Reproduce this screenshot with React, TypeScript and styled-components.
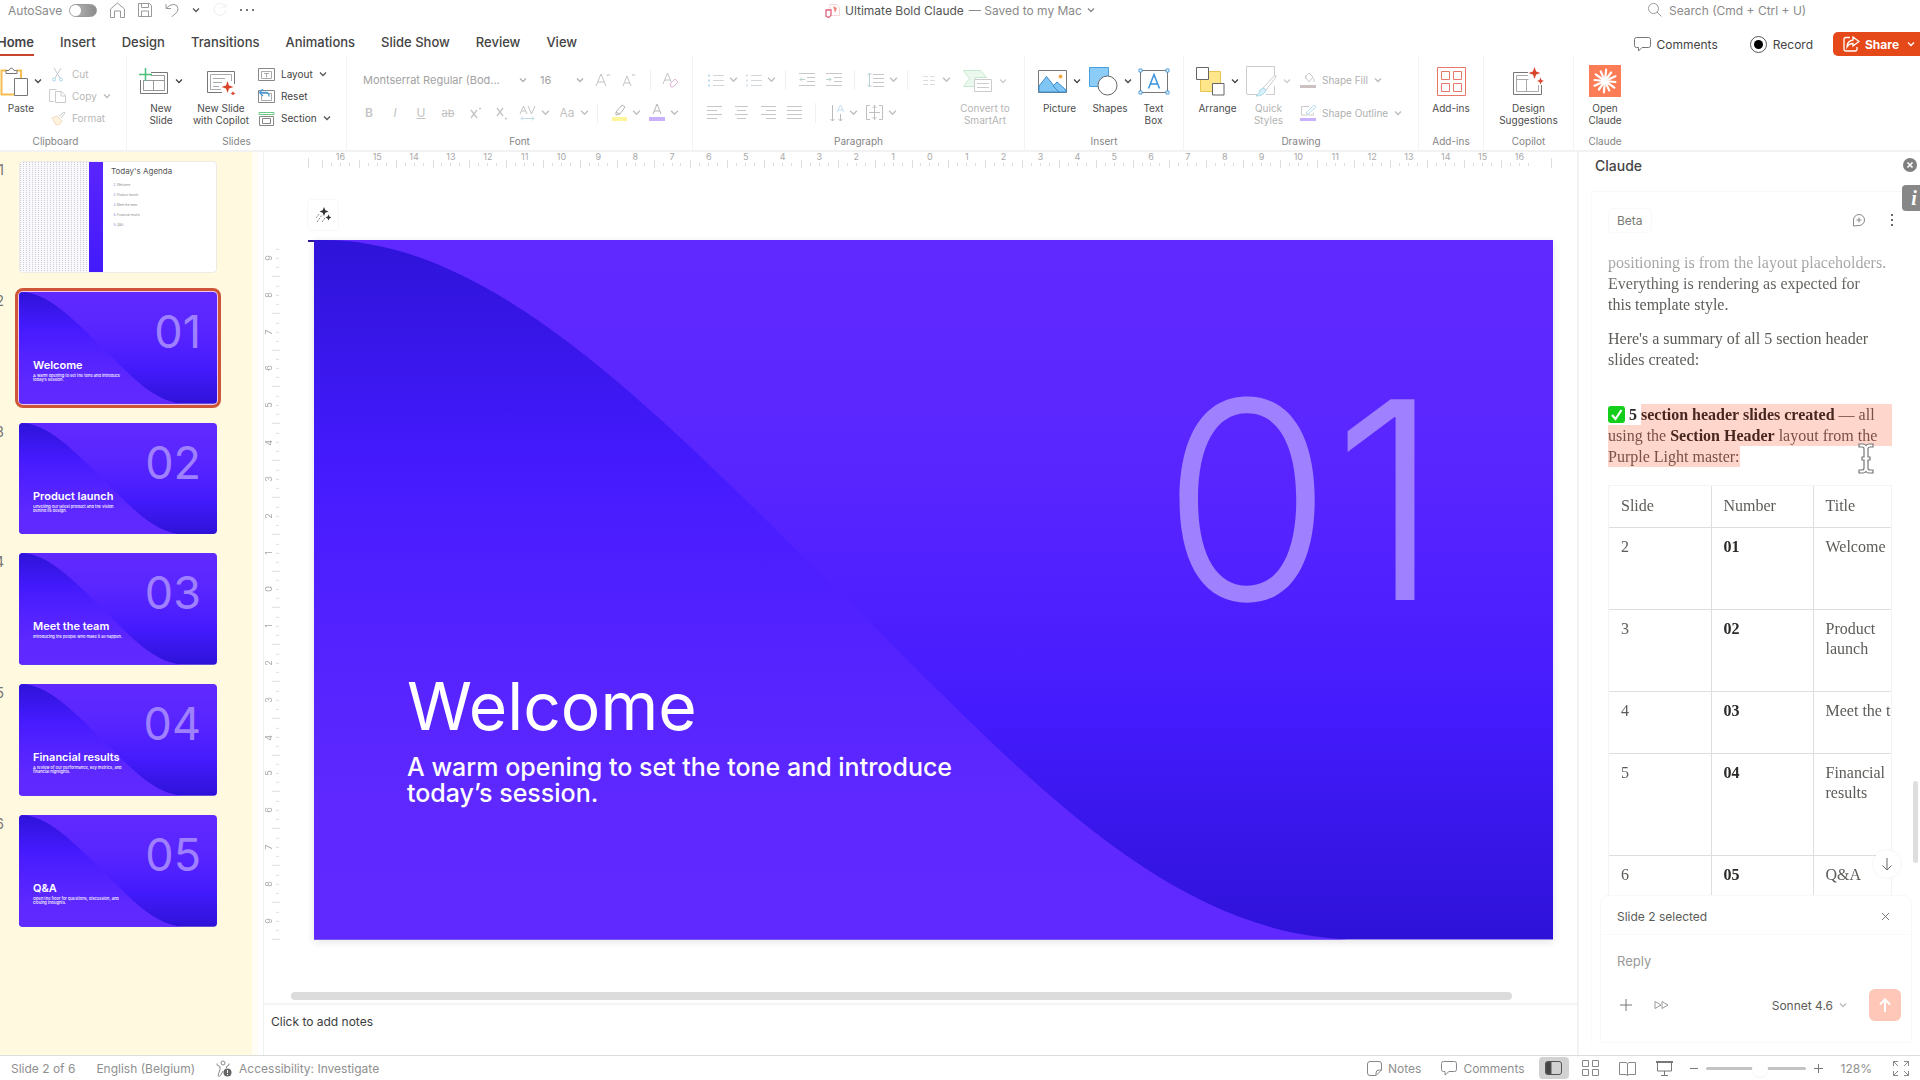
import React from "react";
import styled, { createGlobalStyle, css } from "styled-components";

const sans = `Inter, "Liberation Sans", sans-serif`;
const serif = `"Liberation Serif", serif`;

const GlobalStyle = createGlobalStyle`
  *, *::before, *::after { box-sizing: border-box; }
  body { margin: 0; background: #fff; font-family: ${sans}; color: #444; }
  button, input, select { font: inherit; color: inherit; background: none; border: 0; padding: 0; margin: 0; }
  p { margin: 0; }
  svg { display: block; flex: none; }
`;

/* ---------- shared pieces ---------- */

const Page = styled.div`
  display: flex;
  flex-direction: column;
  height: 100vh;
  overflow: hidden;
`;

const Svg = ({ w, h, children, stroke = "#777", sw = 1 }: {
  w: number; h: number; children: React.ReactNode; stroke?: string; sw?: number;
}) => (
  <svg width={w} height={h} viewBox={`0 0 ${w} ${h}`} fill="none" stroke={stroke} strokeWidth={sw} aria-hidden="true">
    {children}
  </svg>
);

const Chevron = ({ color = "#555", size = 8 }: { color?: string; size?: number }) => (
  <svg width={size} height={size} viewBox="0 0 8 8" fill="none" stroke={color} strokeWidth={1.3} aria-hidden="true">
    <path d="M1 2.5 4 5.5 7 2.5" />
  </svg>
);

/* ---------- title bar ---------- */

const TitleBar = styled.header`
  display: grid;
  grid-template-columns: 1fr auto 1fr;
  align-items: center;
  height: 20px;
  padding: 0 8px;
  flex: none;
  font-size: 12px;
  color: #8a8a8a;
`;

const QuickAccess = styled.div`
  display: flex;
  align-items: center;
  gap: 13px;
`;

const IconButton = styled.button<{ $before?: number; $w?: number }>`
  display: flex;
  align-items: center;
  justify-content: center;
  flex: none;
  margin-left: ${(p) => p.$before ?? 0}px;
  width: ${(p) => (p.$w ? `${p.$w}px` : "auto")};
`;

const ToggleLabel = styled.label`
  display: flex;
  align-items: center;
  gap: 7px;
`;

const Toggle = styled.input`
  appearance: none;
  width: 28px;
  height: 13px;
  border-radius: 7px;
  background: linear-gradient(90deg, #bbb, #8c8c8c);
  border: 1px solid #999;
  &::before {
    content: "";
    display: block;
    width: 11px;
    height: 11px;
    border-radius: 50%;
    background: #fff;
  }
`;

const DocTitle = styled.button`
  display: flex;
  align-items: center;
  gap: 5px;
  color: #8a8a8a;
  b { font-weight: 400; color: #555; }
`;

const SearchBox = styled.label`
  display: flex;
  align-items: center;
  justify-content: flex-end;
  gap: 7px;
  padding-right: 101px;
  input { width: 142px; }
  input::placeholder { color: #8a8a8a; opacity: 1; }
`;

/* ---------- tabs ---------- */

const TabBar = styled.nav`
  display: flex;
  align-items: center;
  height: 36px;
  flex: none;
  font-size: 13px;
  color: #444;
`;

const Tab = styled.button<{ $active?: boolean }>`
  height: 100%;
  margin-right: 26px;
  font-weight: ${(p) => (p.$active ? 600 : 500)};
  padding-top: 9px;
  border-bottom: 2px solid ${(p) => (p.$active ? "#c8452d" : "transparent")};
  ${(p) => p.$active && css`margin-left: -3px;`}
`;

const TabActions = styled.div`
  display: flex;
  align-items: center;
  gap: 32px;
  margin-left: auto;
  padding-top: 12px;
  font-size: 12px;
`;

const TextButton = styled.button<{ $gap?: number; $color?: string }>`
  display: flex;
  align-items: center;
  gap: ${(p) => p.$gap ?? 6}px;
  color: ${(p) => p.$color ?? "inherit"};
  white-space: nowrap;
`;

const ShareButton = styled.button`
  display: flex;
  align-items: center;
  gap: 5px;
  height: 24px;
  width: 87px;
  padding-left: 10px;
  margin-left: -12px;
  border-radius: 5px 0 0 5px;
  background: #e54819;
  color: #fff;
  font-weight: 700;
  svg:last-child { margin-left: 3px; }
`;

/* ---------- ribbon ---------- */

const Ribbon = styled.div`
  display: flex;
  height: 96px;
  flex: none;
  margin-left: -15px;
  border-bottom: 2px solid #f2f2f2;
  font-size: 10px;
`;

const GroupBox = styled.section<{ $w: number; $pad?: number; $center?: boolean }>`
  display: flex;
  flex-direction: column;
  flex: none;
  width: ${(p) => p.$w}px;
  border-right: 1px solid #f3f3f3;
  &:last-child { border-right: 0; }
  > div {
    display: flex;
    flex: 1;
    padding: 7px 0 0 ${(p) => p.$pad ?? 0}px;
    justify-content: ${(p) => (p.$center ? "center" : "flex-start")};
  }
  > h2 {
    margin: 0;
    font-size: 10px;
    line-height: 18px;
    font-weight: 400;
    color: #858585;
    text-align: center;
  }
`;

const Group = ({ label, w, pad, center, children }: {
  label: string; w: number; pad?: number; center?: boolean; children: React.ReactNode;
}) => (
  <GroupBox $w={w} $pad={pad} $center={center}>
    <div>{children}</div>
    <h2>{label}</h2>
  </GroupBox>
);

const Big = styled.button<{ $w: number; $off?: boolean }>`
  display: flex;
  flex-direction: column;
  align-items: center;
  width: ${(p) => p.$w}px;
  line-height: 12px;
  color: ${(p) => (p.$off ? "#b5b5b5" : "#4c4c4c")};
  white-space: pre;
  text-align: center;
  > span {
    display: flex;
    align-items: center;
    gap: 6px;
    height: 36px;
    margin-bottom: 3px;
  }
`;

const BigButton = ({ label, w, icon, chevron, off }: {
  label: string; w: number; icon: React.ReactNode; chevron?: boolean; off?: boolean;
}) => (
  <Big $w={w} $off={off} disabled={off}>
    <span>{icon}{chevron && <Chevron color={off ? "#ccc" : "#444"} />}</span>
    {label}
  </Big>
);

const Stack = styled.div<{ $before: number; $row: number }>`
  display: flex;
  flex-direction: column;
  margin-left: ${(p) => p.$before}px;
  > button { height: ${(p) => p.$row}px; }
`;

const ToolRows = styled.div`
  display: flex;
  flex-direction: column;
`;

const ToolRow = styled.div`
  display: flex;
  align-items: center;
  height: 33px;
  color: #c4c4c4;
  font-size: 12px;
  b { font-weight: 600; }
  s { font-size: 11px; }
`;

const Select = styled.select<{ $w: number }>`
  appearance: none;
  width: ${(p) => p.$w}px;
  font-size: 11px;
  color: #a2a2a2;
`;

const Rule = styled.i<{ $before: number }>`
  width: 1px;
  height: 20px;
  margin-left: ${(p) => p.$before}px;
  background: #f0f0f0;
`;

const Drop = ({ icon, w, before, label }: { icon: React.ReactNode; w: number; before: number; label: string }) => (
  <IconButton $before={before} aria-label={label}>
    <IconButton as="span" $w={w}>{icon}</IconButton>
    <IconButton as="span" $before={5}><Chevron color="#c0c0c0" size={9} /></IconButton>
  </IconButton>
);

const Lines = ({ rows, w = 15 }: { rows: [number, number][]; w?: number }) => (
  <Svg w={w} h={14} stroke="#c8c8c8">
    {rows.map(([a, b], i) => <path key={i} d={`M${a} ${i * 4 + 0.5}H${b}`} />)}
  </Svg>
);

const ListIcon = ({ dots }: { dots: string }) => (
  <Svg w={17} h={14} stroke="#d2d6d8">
    <path d="M6 2.5h11M6 7.5h11M6 12.5h11" />
    <path d="M1 2.5h2M1 7.5h2M1 12.5h2" stroke={dots} strokeWidth={2} />
  </Svg>
);

const FrameIcon = ({ variant }: { variant: "layout" | "reset" | "section" }) => (
  <Svg w={17} h={15} stroke="#888">
    {variant === "section" ? (
      <><path d="M1 1.5h15v2H1z" stroke="#6fca8a" /><path d="M1.5 5.5h14v9h-14zM4.5 7.5h8v5h-8z" /></>
    ) : (
      <><path d="M.5 1.5h16v12H.5z" /><path d="M3.5 4.5h10v7h-10z" stroke="#aaa" /></>
    )}
    {variant === "layout" && <path d="M6 6.5h5M8.5 6.500v4" stroke="#aaa" />}
    {variant === "reset" && <path d="M5 0 1.500 3.500 5 7M1.500 3.500H8q3 0 3 4" stroke="#4a9fe0" strokeWidth={1.400} />}
  </Svg>
);

const icons = {
  paste: (
    <Svg w={28} h={31}>
      <path d="M7 4.500H1.500v24H14M17 4.500h4V12" stroke="#f4bd4f" strokeWidth={2} />
      <path d="M6 7.500V4.500h3q2-5 5 0h3v3z" fill="#fff" />
      <path d="M14.500 12.500h13v17h-13z" fill="#fff" />
    </Svg>
  ),
  newSlide: (
    <Svg w={30} h={27}>
      <path d="M12 4.500h16.500v21H1.500V12" /><path d="M12 7.500h13.500v15H4.500V12M4.500 12.500h21M14.500 12.500v10" stroke="#999" />
      <path d="M6.500 0v13M0 6.500h13" stroke="#4bc07a" strokeWidth={1.500} />
    </Svg>
  ),
  copilotSlide: (
    <Svg w={30} h={27}>
      <path d="M16 24.500H1.500V3.500h27V16" /><path d="M15 21.500H4.500V6.500h21V13M7 10.500h12M7 14.500h9M7 18.500h6" stroke="#aaa" />
      <path d="m21.500 13 1.500 4.500 4.500 1.500-4.500 1.500-1.500 4.500-1.500-4.500-4.500-1.500 4.500-1.500zM27 23l.8 1.700 1.700.8-1.700.8L27 28l-.8-1.700-1.700-.8 1.700-.8z" fill="#d8452a" stroke="none" />
    </Svg>
  ),
  smartArt: (
    <Svg w={30} h={24} stroke="#ccc">
      <path d="M.5 1.500h17l6 7H12v9H.5l6-8z" fill="#eaf8ee" stroke="#c5e8cf" /><path d="M11.500 10.500h17v12h-17zM14 14.500h12M14 18.500h12" fill="#fff" />
    </Svg>
  ),
  picture: (
    <Svg w={29} h={23}>
      <path d="M.5.5h28v22H.5z" fill="#fff" />
      <path d="M1 16 8.500 6.500 21 22H1z" fill="#7fc6f5" stroke="#3c8dd0" /><path d="m15 16 4-4 9 8v2h-7z" fill="#7fc6f5" stroke="#3c8dd0" />
      <circle cx="22.500" cy="6.500" r="2" fill="#f5a94b" stroke="none" />
    </Svg>
  ),
  shapes: (
    <Svg w={29} h={29}>
      <path d="M.5.5h19v19H.5z" fill="#8ccdf7" stroke="#4a9fe0" /><circle cx="18.500" cy="18.500" r="9.500" fill="#fff" stroke="#666" />
    </Svg>
  ),
  textBox: (
    <Svg w={32} h={27}>
      <path d="M2.500 2.500h27v22h-27z" /><path d="M1 1h3v3H1zM28 1h3v3h-3zM1 23h3v3H1zM28 23h3v3h-3z" fill="#fff" stroke="#4a9fe0" />
      <path d="m10.500 20.500 5.500-14 5.500 14M12.500 16h7" stroke="#3a93dc" strokeWidth={1.500} />
    </Svg>
  ),
  arrange: (
    <Svg w={29} h={29}>
      <path d="M4.500 4.500h20v20h-20z" fill="#ffe68a" stroke="#e8c450" /><path d="M.5.500h12v12H.5zM16.500 16.500h11.500v11.500H16.500z" fill="#fff" stroke="#666" />
    </Svg>
  ),
  quickStyles: (
    <Svg w={31} h={31} stroke="#ccc">
      <path d="M12 28.500H2q-1.500 0-1.500-1.500V.5h28V10M28.500 20v8.500H20" />
      <path d="m30 11-10 13-3-2L28 10q3-1 2 1z" fill="#fff" /><path d="M17 22l3 2q-2 6-10 6 4-3 4-6z" fill="#d8f0f8" stroke="#a9d8e8" />
    </Svg>
  ),
  addIns: (
    <Svg w={29} h={29} stroke="#e8796a">
      <path d="M.5.500h28v28H.5zM4.500 4.500h8v8h-8zM16.500 4.500h8v8h-8zM4.500 16.500h8v8h-8zM16.500 16.500h8v8h-8z" />
    </Svg>
  ),
  design: (
    <Svg w={31} h={29}>
      <path d="M15 5.500H.5v22h28V18" /><path d="M15 8.500H3.500v16h22V18M3.500 12.500h12M13.500 12.500v12" stroke="#aaa" />
      <path d="m21.500 0 1.600 4.400 4.400 1.600-4.400 1.600L21.500 12l-1.600-4.400L15.500 6l4.400-1.600zM27.500 10.500l1 2.500 2.500 1-2.500 1-1 2.500-1-2.500-2.500-1 2.500-1z" fill="#d8452a" stroke="none" />
    </Svg>
  ),
  claude: (
    <Svg w={32} h={32} stroke="#fff" sw={2.200}>
      <path d="M0 0h32v32H0z" fill="#fb7c55" stroke="none" />
      {Array.from({ length: 12 }, (_, i) => {
        const a = (i * Math.PI) / 6 + 0.1;
        const r = i % 2 ? 11.5 : 10.5;
        return <path key={i} strokeLinecap="round" d={`M16 16L${(16 + r * Math.cos(a)).toFixed(1)} ${(16 + r * Math.sin(a)).toFixed(1)}`} />;
      })}
    </Svg>
  ),
};

const HomeRibbon = () => (
  <Ribbon>
    <Group label="Clipboard" w={142} pad={13}>
      <BigButton label="Paste" w={46} chevron icon={icons.paste} />
      <Stack $before={5} $row={22}>
        <TextButton $color="#b8b8b8">
          <Svg w={17} h={15} stroke="#c6cdd2"><path d="m5 1 6 10M12 1 6 11" /><circle cx="5" cy="12.500" r="1.500" stroke="#a9d8ee" /><circle cx="12" cy="12.500" r="1.500" stroke="#a9d8ee" /></Svg>Cut
        </TextButton>
        <TextButton $color="#b8b8b8">
          <Svg w={17} h={16} stroke="#ccc"><path d="M5 13.500H.5V1.500h7M6.500 3.500h6l4 4v7h-10zM12 4v4h4" /></Svg>Copy<Chevron color="#bbb" />
        </TextButton>
        <TextButton $color="#b8b8b8">
          <Svg w={17} h={15} stroke="#ccc"><path d="m10 5 5-4 1 1-4 5" /><path d="m3 7 5-2 5 5-2 3-4 1z" fill="#fff3df" stroke="#f2dcc0" /></Svg>Format
        </TextButton>
      </Stack>
    </Group>
    <Group label="Slides" w={220} pad={3}>
      <BigButton label={"New\nSlide"} w={62} chevron icon={icons.newSlide} />
      <BigButton label={"New Slide\nwith Copilot"} w={58} icon={icons.copilotSlide} />
      <Stack $before={8} $row={22}>
        <TextButton><FrameIcon variant="layout" />Layout<Chevron /></TextButton>
        <TextButton><FrameIcon variant="reset" />Reset</TextButton>
        <TextButton><FrameIcon variant="section" />Section<Chevron /></TextButton>
      </Stack>
    </Group>
    <Group label="Font" w={346} pad={16}>
      <ToolRows>
        <ToolRow>
          <Select $w={156} aria-label="Font"><option>Montserrat Regular (Bod...</option></Select>
          <Chevron color="#b0b0b0" />
          <IconButton $before={13}><Select $w={36} aria-label="Font size"><option>16</option></Select><Chevron color="#b0b0b0" /></IconButton>
          <IconButton $before={11} aria-label="Increase font size"><Svg w={16} h={16} stroke="#c4c4c4"><path d="m1 14 5-12 5 12M3 10h6M12 4l1.500-2L15 4" /></Svg></IconButton>
          <IconButton $before={11} aria-label="Decrease font size"><Svg w={14} h={16} stroke="#c4c4c4"><path d="m1 14 4-10 4 10M3 11h5M10 2l1.500 2L13 2" /></Svg></IconButton>
          <Rule $before={14} />
          <IconButton $before={11} aria-label="Clear formatting"><Svg w={17} h={17} stroke="#c4c4c4"><path d="m1 13 4.500-11L10 13M3 9h5" /><path d="m8 13 5-5 3 3-5 5h-2z" fill="#fff" stroke="#e6b5dc" /></Svg></IconButton>
        </ToolRow>
        <ToolRow>
          <IconButton $w={12} aria-label="Bold"><b>B</b></IconButton>
          <IconButton $w={12} $before={14} aria-label="Italic"><i>I</i></IconButton>
          <IconButton $w={12} $before={14} aria-label="Underline"><u>U</u></IconButton>
          <IconButton $w={16} $before={13} aria-label="Strikethrough"><s>ab</s></IconButton>
          <IconButton $w={14} $before={13} aria-label="Superscript"><Svg w={12} h={14} stroke="#c4c4c4" sw={1.300}><path d="m1 4 6 8M7 4l-6 8M9 2.500h2" /></Svg></IconButton>
          <IconButton $w={14} $before={12} aria-label="Subscript"><Svg w={12} h={14} stroke="#c4c4c4" sw={1.300}><path d="m1 2 6 8M7 2l-6 8M9 12.500h2" /></Svg></IconButton>
          <Drop before={10} w={17} label="Character spacing" icon={<Svg w={17} h={16} stroke="#c4c4c4"><path d="m1 9 3.500-8L8 9M2 6h5M9 1l3.500 8L16 1" /><path d="M2 13.500h13M4 11.500l-2 2 2 2M13 11.500l2 2-2 2" stroke="#c2dde8" /></Svg>} />
          <Drop before={9} w={16} label="Change case" icon="Aa" />
          <Rule $before={8} />
          <Drop before={14} w={15} label="Highlight" icon={<Svg w={15} h={17} stroke="#b5b5b5"><path d="m4 8 6-7 3 2-5 7-4 1zM4 8l4 2" /><path d="M0 13h15v4H0z" fill="#fdf59a" stroke="none" /></Svg>} />
          <Drop before={8} w={16} label="Font color" icon={<Svg w={16} h={17} stroke="#b5b5b5"><path d="M4 10 8 0l4 10M5 7h6" /><path d="M0 13h16v4H0z" fill="#c9b2fb" stroke="none" /></Svg>} />
        </ToolRow>
      </ToolRows>
    </Group>
    <Group label="Paragraph" w={332} pad={14}>
      <ToolRows>
        <ToolRow>
          <Drop before={0} w={17} label="Bullets" icon={<ListIcon dots="#bfdcee" />} />
          <Drop before={7} w={17} label="Numbering" icon={<ListIcon dots="#d8e2e6" />} />
          <Rule $before={9} />
          <IconButton $before={13} aria-label="Decrease indent"><Svg w={16} h={14} stroke="#c8c8c8"><path d="M0 .5h16M8 4.500h8M8 8.500h8M0 12.500h16" /><path d="M6 6.500H1M3 4.500l-2 2 2 2" stroke="#b9d3c8" /></Svg></IconButton>
          <IconButton $before={11} aria-label="Increase indent"><Svg w={16} h={14} stroke="#c8c8c8"><path d="M0 .5h16M8 4.500h8M8 8.500h8M0 12.500h16" /><path d="M0 6.500h5M3 4.500l2 2-2 2" stroke="#b9d3c8" /></Svg></IconButton>
          <Rule $before={12} />
          <Drop before={12} w={17} label="Line spacing" icon={<Svg w={17} h={16} stroke="#c8c8c8"><path d="M6 2.500h11M6 6.500h11M6 10.500h11M6 14.500h11" /><path d="M2.500 1v14M.5 3l2-2 2 2M.5 13l2 2 2-2" stroke="#b9cfd8" /></Svg>} />
          <Rule $before={9} />
          <Drop before={13} w={16} label="Columns" icon={<Svg w={12} h={10} stroke="#d8dde2"><path d="M0 1.500h5M0 5.500h5M0 9.500h5M7 1.500h5M7 5.500h5M7 9.500h5" /></Svg>} />
        </ToolRow>
        <ToolRow>
          <IconButton aria-label="Align left"><Lines rows={[[0, 15], [0, 10], [0, 15], [0, 10]]} /></IconButton>
          <IconButton $before={12} aria-label="Center"><Lines rows={[[1, 14], [3, 12], [1, 14], [3, 12]]} /></IconButton>
          <IconButton $before={12} aria-label="Align right"><Lines rows={[[0, 15], [5, 15], [0, 15], [5, 15]]} /></IconButton>
          <IconButton $before={11} aria-label="Justify"><Lines rows={[[0, 15], [0, 15], [0, 15], [0, 15]]} /></IconButton>
          <Rule $before={13} />
          <Drop before={14} w={14} label="Text direction" icon={<Svg w={14} h={18} stroke="#bbb"><path d="M2.500 1v16M.5 15l2 2 2-2M10.500 10v7M8.500 15l2 2 2-2" /><path d="m7 8 3.500-7L14 8M8 6h5" stroke="#c2dff0" /></Svg>} />
          <Drop before={8} w={17} label="Align text" icon={<Svg w={17} h={15} stroke="#c0c0c0"><path d="M4 .5H.5v14H4M13 .5h3.500v14H13M8.500 0v15M3 7.500h11M6.500 3l2-2 2 2M6.500 12l2 2 2-2" /></Svg>} />
        </ToolRow>
      </ToolRows>
      <BigButton label={"Convert to\nSmartArt"} w={68} off chevron icon={icons.smartArt} />
    </Group>
    <Group label="Insert" w={159} pad={9}>
      <BigButton label="Picture" w={51} chevron icon={icons.picture} />
      <BigButton label="Shapes" w={50} chevron icon={icons.shapes} />
      <BigButton label={"Text\nBox"} w={37} icon={icons.textBox} />
    </Group>
    <Group label="Drawing" w={235} pad={8}>
      <BigButton label="Arrange" w={51} chevron icon={icons.arrange} />
      <BigButton label={"Quick\nStyles"} w={51} off chevron icon={icons.quickStyles} />
      <Stack $before={6} $row={33}>
        <TextButton $color="#b0b0b0">
          <Svg w={16} h={16} stroke="#ccc"><path d="m5 5 4-4 4 4-4 5zM13 6q2 2 1 4M6 3v4" /><path d="M0 13h16v3H0z" fill="#cdc0c0" stroke="none" /></Svg>Shape Fill<Chevron color="#bbb" />
        </TextButton>
        <TextButton $color="#b0b0b0">
          <Svg w={16} h={16} stroke="#ccc"><path d="M9 1.500H1.500V10h12V8" /><path d="m6 8 8-8 2 2-8 7z" stroke="#b6dced" /><path d="M0 13h16v3H0z" fill="#c9b2fb" stroke="none" /></Svg>Shape Outline<Chevron color="#bbb" />
        </TextButton>
      </Stack>
    </Group>
    <Group label="Add-ins" w={65} center><BigButton label="Add-ins" w={60} icon={icons.addIns} /></Group>
    <Group label="Copilot" w={90} center><BigButton label={"Design\nSuggestions"} w={80} icon={icons.design} /></Group>
    <Group label="Claude" w={62} center><BigButton label={"Open\nClaude"} w={60} icon={icons.claude} /></Group>
  </Ribbon>
);

/* ---------- slides ---------- */

type SlideData = { number: string; title: string; text: string };

const slides: SlideData[] = [
  { number: "01", title: "Welcome", text: "A warm opening to set the tone and introduce\ntoday’s session." },
  { number: "02", title: "Product launch", text: "Unveiling our latest product and the vision\nbehind its design." },
  { number: "03", title: "Meet the team", text: "Introducing the people who make it all happen." },
  { number: "04", title: "Financial results", text: "A review of our performance, key metrics, and\nfinancial highlights." },
  { number: "05", title: "Q&A", text: "Open the floor for questions, discussion, and\nclosing thoughts." },
];

const SlideBox = styled.article<{ $large?: boolean }>`
  display: grid;
  width: 100%;
  aspect-ratio: 1238 / 699;
  overflow: hidden;
  border-radius: ${(p) => (p.$large ? 0 : 4)}px;
  color: #fff;
  > * { grid-area: 1 / 1; }
  > svg { width: 100%; height: 100%; }
`;

const SlideText = styled.div<{ $large?: boolean }>`
  display: flex;
  flex-direction: column;
  padding: ${(p) => (p.$large ? "122px 112px 0 93px" : "17px 16px 0 14px")};
  h3, h4, p { margin: 0; white-space: pre; }
  h3 {
    align-self: flex-end;
    font-size: ${(p) => (p.$large ? 276 : 45)}px;
    line-height: ${(p) => (p.$large ? 276 : 45)}px;
    font-weight: ${(p) => (p.$large ? 350 : 400)};
    color: #9f80ff;
  }
  h4 {
    font-size: ${(p) => (p.$large ? 66 : 11)}px;
    line-height: ${(p) => (p.$large ? 64 : 12)}px;
    font-weight: ${(p) => (p.$large ? 400 : 600)};
    margin-top: ${(p) => (p.$large ? 36 : 5)}px;
  }
  p {
    font-size: ${(p) => (p.$large ? 25 : 4)}px;
    line-height: ${(p) => (p.$large ? 26 : 4)}px;
    font-weight: 500;
    margin-top: ${(p) => (p.$large ? 16 : 3)}px;
  }
`;

const Slide = ({ data, large }: { data: SlideData; large?: boolean }) => {
  const id = `wave${large ? "L" : "S"}${data.number}`;
  return (
    <SlideBox $large={large}>
      <svg viewBox="0 0 1238 699" preserveAspectRatio="none" aria-hidden="true">
        <defs>
          <linearGradient id={`${id}a`} x1="0" y1="0" x2="0" y2="1">
            <stop offset="0" stopColor="#6029ff" /><stop offset=".3" stopColor="#5a26ff" />
            <stop offset=".5" stopColor="#5020ff" /><stop offset=".68" stopColor="#441bfd" />
            <stop offset="1" stopColor="#2e12d8" />
          </linearGradient>
          <linearGradient id={`${id}b`} x1="0" y1="0" x2="0" y2="1">
            <stop offset="0" stopColor="#2e13d8" /><stop offset=".3" stopColor="#431afc" />
            <stop offset=".4" stopColor="#4a1dff" /><stop offset=".6" stopColor="#5523ff" />
            <stop offset=".8" stopColor="#5e28ff" /><stop offset="1" stopColor="#6029ff" />
          </linearGradient>
        </defs>
        <path d="M0 0h1238v699H0z" fill={`url(#${id}a)`} />
        <path d="M0 0h10C180 0 345 175 522 349S850 699 1045 699H0z" fill={`url(#${id}b)`} />
      </svg>
      <SlideText $large={large}>
        <h3>{data.number}</h3>
        <h4>{data.title}</h4>
        <p>{data.text}</p>
      </SlideText>
    </SlideBox>
  );
};

const AgendaSlide = styled.article`
  display: flex;
  width: 100%;
  aspect-ratio: 1238 / 699;
  background: #fff;
  border: 1px solid #ecebe6;
  border-radius: 4px;
  overflow: hidden;
  > i {
    width: 69px;
    background:
      repeating-linear-gradient(#0000 0 1px, #f9f9fc 1px 2px),
      repeating-linear-gradient(90deg, #cfccde 0 1px, #f9f9fc 1px 3px);
  }
  > b { width: 14px; background: linear-gradient(#5a25ff, #421afa); }
  > div { padding: 4px 0 0 8px; }
  h3 { margin: 0 0 4px; font-size: 8px; line-height: 10px; font-weight: 400; color: #555; white-space: nowrap; }
  ol { margin: 0; padding: 0 0 0 6px; font-size: 3px; line-height: 10px; color: #888; }
  li::marker { color: #7a66e8; }
`;

const Thumbs = styled.aside`
  display: flex;
  flex-direction: column;
  gap: 19px;
  width: 258px;
  flex: none;
  padding-top: 9px;
  background: #fff9e0;
  border-right: 6px solid #fffdf4;
`;

const ThumbItem = styled.div`
  display: flex;
  gap: 15px;
  > span {
    display: flex;
    justify-content: flex-end;
    width: 4px;
    font-size: 14px;
    line-height: 17px;
    color: #777;
  }
`;

const ThumbButton = styled.button<{ $selected?: boolean }>`
  width: 198px;
  border-radius: 4px;
  text-align: left;
  ${(p) => p.$selected && css`
    outline: 3px solid #cd5638;
    outline-offset: 1px;
    box-shadow: 0 0 0 1px #f0c4f0;
  `}
`;

/* ---------- editor ---------- */

const Main = styled.main`
  display: flex;
  flex: 1;
  min-height: 0;
`;

const Editor = styled.section`
  display: flex;
  flex-direction: column;
  flex: 1;
  min-width: 0;
  margin-left: 5px;
  border-left: 1px solid #f0f0f0;
  border-right: 2px solid #f2f2f2;
`;

const ruleTick = "#dedede";

const HRuler = styled.div`
  display: flex;
  height: 16px;
  padding: 0 39px 0 58px;
  font-size: 9px;
  line-height: 9px;
  color: #a8a8a8;
  background:
    linear-gradient(${ruleTick}, ${ruleTick}) 44px 100% / 1px 10px no-repeat,
    linear-gradient(${ruleTick}, ${ruleTick}) calc(100% - 25px) 100% / 1px 10px no-repeat;
  span {
    flex: 1;
    text-align: center;
    background:
      linear-gradient(${ruleTick}, ${ruleTick}) left bottom / 1px 8px no-repeat,
      linear-gradient(${ruleTick}, ${ruleTick}) 25% calc(100% - 2px) / 1px 3px no-repeat,
      linear-gradient(${ruleTick}, ${ruleTick}) 50% calc(100% - 2px) / 1px 3px no-repeat,
      linear-gradient(${ruleTick}, ${ruleTick}) 75% calc(100% - 2px) / 1px 3px no-repeat;
  }
`;

const VRuler = styled.div`
  display: flex;
  flex-direction: column;
  width: 16px;
  font-size: 9px;
  line-height: 9px;
  color: #a8a8a8;
  span {
    display: flex;
    flex: 1;
    justify-content: center;
    writing-mode: vertical-rl;
    transform: rotate(180deg);
    background:
      linear-gradient(${ruleTick}, ${ruleTick}) left top / 8px 1px no-repeat,
      linear-gradient(${ruleTick}, ${ruleTick}) 1px 25% / 3px 1px no-repeat,
      linear-gradient(${ruleTick}, ${ruleTick}) 1px 50% / 3px 1px no-repeat,
      linear-gradient(${ruleTick}, ${ruleTick}) 1px 75% / 3px 1px no-repeat;
  }
`;

const DesignerButton = styled.button`
  display: flex;
  align-items: center;
  justify-content: center;
  width: 32px;
  height: 32px;
  margin: 31px 0 9px 43px;
  border: 1px solid #f8f8f8;
  border-radius: 4px;
  flex: none;
`;

const Stage = styled.div`
  display: grid;
  grid-template-columns: 50px minmax(0, 1fr);
  position: relative;
  padding-right: 24px;
  > article { box-shadow: 0 2px 8px #0000001c; }
  &::before {
    content: "";
    position: absolute;
    left: 44px;
    top: 0;
    width: 6px;
    height: 2px;
    background: #2b1899;
  }
`;

const HScroll = styled.div`
  height: 8px;
  margin: auto 65px 3px 27px;
  border-radius: 4px;
  background: #dcdcdc;
  flex: none;
`;

const Notes = styled.input`
  height: 52px;
  padding: 0 7px 18px;
  border-top: 2px solid #f4f4f4;
  font-size: 12px;
  flex: none;
  &::placeholder { color: #3c3c3c; opacity: 1; }
`;

const range = (n: number) => Array.from({ length: n * 2 + 1 }, (_, i) => Math.abs(i - n));

/* ---------- assistant pane ---------- */

const Pane = styled.aside`
  display: flex;
  flex-direction: column;
  width: 341px;
  flex: none;
  position: relative;
`;

const PaneHeader = styled.header`
  display: flex;
  align-items: center;
  justify-content: space-between;
  height: 26px;
  padding: 0 3px 0 16px;
  flex: none;
  h2 { margin: 0; font-size: 14px; font-weight: 500; color: #444; }
`;

const InfoBadge = styled.button`
  position: absolute;
  top: 33px;
  right: 0;
  width: 18px;
  height: 26px;
  border-radius: 4px 0 0 4px;
  background: #878787;
  color: #fff;
  font: italic 700 20px/24px ${serif};
  padding-left: 6px;
`;

const PaneBody = styled.div`
  display: flex;
  flex-direction: column;
  flex: 1;
  min-height: 0;
  margin: 13px 0 12px 12px;
  border-left: 1px solid #fafafa;
  border-top: 1px solid #f8f8f8;
`;

const BetaBar = styled.div`
  display: flex;
  align-items: center;
  gap: 24px;
  height: 56px;
  padding: 0 26px 0 16px;
  flex: none;
  font-size: 12px;
  color: #7a7a75;
  span { padding: 4px 8px; margin-right: auto; border: 1px solid #f9f9f9; border-radius: 4px; }
`;

const Chat = styled.div`
  flex: 1;
  min-height: 0;
  overflow: hidden;
  position: relative;
  padding: 4px 28px 0 16px;
  font: 16px/21px ${serif};
  color: #5c5c58;
  white-space: nowrap;
  mask-image: linear-gradient(#0006, #0008 16px, #000 40px);
  > p { margin-bottom: 13px; white-space: pre; }
  strong { color: #2c2a28; }
`;

const Marked = styled.div`
  display: flex;
  flex-direction: column;
  align-items: flex-start;
  margin: 34px 0 18px;
  color: #7b5046;
  strong { color: #482720; }
`;

const MarkLine = styled.div<{ $fill?: boolean }>`
  display: flex;
  gap: 4px;
  width: ${(p) => (p.$fill ? "100%" : "auto")};
  mark { flex: 1; background: #ffd6cb; color: inherit; white-space: pre; }
  > strong { color: #2c2a28; }
  > svg { margin-top: 2px; }
`;

const TableClip = styled.div`
  overflow: hidden;
  border: 1px solid #f4f4f4;
  border-bottom: 0;
`;

const Table = styled.table`
  border-collapse: collapse;
  table-layout: fixed;
  width: 330px;
  line-height: 20px;
  th, td {
    padding: 10px 12px;
    font-weight: 400;
    text-align: left;
    vertical-align: top;
    white-space: pre;
    border-right: 1px solid #dedede;
    border-bottom: 1px solid #dedede;
  }
  td { padding-top: 9px; }
  th:last-child, td:last-child { border-right: 0; }
  col { width: 102px; }
  col:last-child { width: auto; }
`;

const Row = styled.tr<{ $lines: number }>`
  height: ${(p) => p.$lines * 20 + 22}px;
  thead & { height: 41px; }
`;

const rows: [string, string, string, number][] = [
  ["2", "01", "Welcome", 3],
  ["3", "02", "Product\nlaunch", 3],
  ["4", "03", "Meet the team", 2],
  ["5", "04", "Financial\nresults", 4],
  ["6", "05", "Q&A", 3],
];

const ToBottom = styled.button`
  position: absolute;
  right: 19px;
  bottom: 17px;
  display: flex;
  align-items: center;
  justify-content: center;
  width: 28px;
  height: 28px;
  border-radius: 50%;
  background: #fff;
  box-shadow: 0 0 2px #0000001a;
`;

const ScrollThumb = styled.i`
  position: absolute;
  right: 2px;
  top: 629px;
  width: 5px;
  height: 82px;
  border-radius: 3px;
  background: #dedede;
`;

const CursorMark = styled.span`
  position: absolute;
  left: 279px;
  top: 291px;
`;

const Composer = styled.form`
  display: flex;
  flex-direction: column;
  flex: none;
  height: 148px;
  margin: 0 8px;
  border: 1px solid #f8f8f8;
  border-radius: 8px 8px 0 0;
  font-size: 12px;
  color: #5c5c58;
`;

const Context = styled.div`
  display: flex;
  align-items: center;
  justify-content: space-between;
  height: 39px;
  padding: 2px 21px 0 16px;
  border-bottom: 1px solid #fafafa;
`;

const Reply = styled.input`
  height: 52px;
  padding: 0 16px;
  font-size: 13px;
  &::placeholder { color: #999; opacity: 1; }
`;

const ComposerBar = styled.div`
  display: flex;
  align-items: center;
  gap: 22px;
  height: 36px;
  padding: 0 10px 0 19px;
`;

const ModelButton = styled(TextButton)`
  margin-left: auto;
  font-size: 12px;
`;

const Send = styled.button`
  display: flex;
  align-items: center;
  justify-content: center;
  width: 32px;
  height: 32px;
  border-radius: 6px;
  background: #ffc7b7;
`;

const Assistant = () => (
  <Pane>
    <PaneHeader>
      <h2>Claude</h2>
      <IconButton aria-label="Close pane">
        <Svg w={14} h={14} stroke="#fff" sw={1.600}><circle cx="7" cy="7" r="7" fill="#808080" stroke="none" /><path d="m4.500 4.500 5 5M9.500 4.500l-5 5" /></Svg>
      </IconButton>
    </PaneHeader>
    <InfoBadge>i</InfoBadge>
    <PaneBody>
      <BetaBar>
        <span>Beta</span>
        <IconButton aria-label="New chat"><Svg w={14} h={14} stroke="#888"><path d="M1.500 13V7a5.500 5.500 0 1 1 5.500 5.500zM7 4.500v5M4.500 7h5" /></Svg></IconButton>
        <IconButton aria-label="More"><Svg w={4} h={14}><path d="M1 1h2v2H1zM1 6h2v2H1zM1 11h2v2H1z" fill="#666" stroke="none" /></Svg></IconButton>
      </BetaBar>
      <Chat>
        <p>{"positioning is from the layout placeholders.\nEverything is rendering as expected for\nthis template style."}</p>
        <p>{"Here's a summary of all 5 section header\nslides created:"}</p>
        <Marked>
          <MarkLine $fill>
            <Svg w={17} h={17} stroke="#fff" sw={2.200}><rect width="17" height="17" rx="3" fill="#14ce1c" stroke="none" /><path d="m4 9 3.500 4L13.500 4" /></Svg>
            <strong>5</strong>
            <mark><strong>section header slides created</strong> — all</mark>
          </MarkLine>
          <MarkLine $fill><mark>using the <strong>Section Header</strong> layout from the</mark></MarkLine>
          <MarkLine><mark>Purple Light master:</mark></MarkLine>
        </Marked>
        <TableClip>
          <Table>
            <colgroup><col /><col /><col /></colgroup>
            <thead><Row $lines={1}><th>Slide</th><th>Number</th><th>Title</th></Row></thead>
            <tbody>
              {rows.map(([s, n, t, lines]) => (
                <Row key={s} $lines={lines}><td>{s}</td><td><strong>{n}</strong></td><td>{t}</td></Row>
              ))}
            </tbody>
          </Table>
        </TableClip>
        <ToBottom aria-label="Scroll to bottom"><Svg w={12} h={13} stroke="#666"><path d="M6 0v12M1.500 7.500 6 12l4.500-4.500" /></Svg></ToBottom>
      </Chat>
      <Composer onSubmit={(e) => e.preventDefault()}>
        <Context>
          Slide 2 selected
          <IconButton type="button" aria-label="Clear selection"><Svg w={9} h={9}><path d="m1 1 7 7M8 1 1 8" /></Svg></IconButton>
        </Context>
        <Reply placeholder="Reply" aria-label="Reply" />
        <ComposerBar>
          <IconButton type="button" aria-label="Add"><Svg w={12} h={12}><path d="M6 0v12M0 6h12" /></Svg></IconButton>
          <IconButton type="button" aria-label="Skip"><Svg w={15} h={10} stroke="#999"><path d="M1 1.500v7L7 5zM8 1.500v7L14 5z" strokeLinejoin="round" /></Svg></IconButton>
          <ModelButton type="button">Sonnet 4.6<Chevron color="#bbb" /></ModelButton>
          <Send aria-label="Send"><Svg w={12} h={14} stroke="#fff" sw={2}><path d="M6 14V1.500M1 6.500l5-5 5 5" /></Svg></Send>
        </ComposerBar>
      </Composer>
    </PaneBody>
    <ScrollThumb />
    <CursorMark>
      <Svg w={16} h={31} stroke="#777" sw={1.200}>
        <path d="M1 1h4q2 0 3 1.500Q9 1 11 1h4v3h-3q-2 0-2 2v8h2v3h-2v8q0 2 2 2h3v3h-4q-2 0-3-1.500Q7 30 5 30H1v-3h3q2 0 2-2v-8H4v-3h2V6q0-2-2-2H1z" fill="#fff" />
      </Svg>
    </CursorMark>
  </Pane>
);

/* ---------- status bar ---------- */

const StatusBar = styled.footer`
  display: flex;
  align-items: center;
  height: 25px;
  padding: 0 11px;
  flex: none;
  border-top: 1px solid #dcdcdc;
  font-size: 12px;
  color: #8f8f8f;
`;

const StatusGroup = styled.div<{ $gap: number; $end?: boolean }>`
  display: flex;
  align-items: center;
  gap: ${(p) => p.$gap}px;
  margin-left: ${(p) => (p.$end ? "auto" : "0")};
`;

const ViewButton = styled.button<{ $on?: boolean }>`
  display: flex;
  align-items: center;
  justify-content: center;
  width: 30px;
  height: 22px;
  border-radius: 4px;
  background: ${(p) => (p.$on ? "#d2d2d2" : "none")};
`;

const Zoom = styled.input`
  appearance: none;
  width: 100px;
  height: 22px;
  margin: 0 8px;
  &::-webkit-slider-runnable-track { height: 3px; border-radius: 2px; background: #c4c4c4; }
  &::-webkit-slider-thumb {
    appearance: none;
    width: 16px;
    height: 16px;
    margin-top: -6px;
    border-radius: 50%;
    background: #fff;
    box-shadow: 0 1px 1px #0000000f;
  }
`;

const Status = () => (
  <StatusBar>
    <StatusGroup $gap={21}>
      <span>Slide 2 of 6</span>
      <TextButton>English (Belgium)</TextButton>
      <TextButton $gap={7}>
        <Svg w={16} h={17} stroke="#888">
          <circle cx="7" cy="3" r="2" /><path d="M1 3.500q-1 2 3 3v3l-2 6q1 2 2.500 0L7 11M13 3.500q1 2-2.500 3V8" />
          <circle cx="11.500" cy="12.500" r="4" fill="#666" stroke="none" /><path d="M11.500 10v3M11.500 14v1" stroke="#fff" />
        </Svg>
        Accessibility: Investigate
      </TextButton>
    </StatusGroup>
    <StatusGroup $gap={7} $end>
      <StatusGroup $gap={20}>
        <TextButton><Svg w={15} h={15} stroke="#888"><path d="M9 14.500H3q-2.500 0-2.500-2.500V3Q.5.500 3 .5h9q2.500 0 2.500 2.500v6L9 14.500V12q0-3 3-3h2.500" /></Svg>Notes</TextButton>
        <TextButton><Svg w={16} h={16} stroke="#888"><path d="M2.500 1.500h11q2 0 2 2v6q0 2-2 2H8l-4 3.500v-3.500H2.500q-2 0-2-2v-6q0-2 2-2z" /></Svg>Comments</TextButton>
      </StatusGroup>
      <StatusGroup $gap={7}>
        <span />
        <ViewButton $on aria-label="Normal view"><Svg w={17} h={14} stroke="#555"><rect x=".5" y=".5" width="16" height="13" rx="2.500" /><path d="M1 2q0-1 1-1h4v12H2q-1 0-1-1z" fill="#444" /></Svg></ViewButton>
        <ViewButton aria-label="Slide sorter"><Svg w={17} h={16} stroke="#888"><path d="M.5.500h6v6h-6zM10.500.5h6v6h-6zM.5 9.500h6v6h-6zM10.500 9.500h6v6h-6z" /></Svg></ViewButton>
        <ViewButton aria-label="Reading view"><Svg w={17} h={15} stroke="#888"><path d="M.5 1.500h6.500l1.500 1 1.500-1h6.500v12H10l-1.500 1-1.500-1H.5zM8.500 2.500v12" /></Svg></ViewButton>
        <ViewButton aria-label="Slide show"><Svg w={17} h={15} stroke="#777"><path d="M1.500 1v9h14V1M8.500 10v4M5 14.500h7" /><path d="M0 1h17" strokeWidth={2} /></Svg></ViewButton>
      </StatusGroup>
      <StatusGroup $gap={0}>
        <IconButton $before={3} aria-label="Zoom out"><Svg w={8} h={8}><path d="M0 4.500h8" /></Svg></IconButton>
        <Zoom type="range" min={10} max={400} defaultValue={225} aria-label="Zoom" />
        <IconButton aria-label="Zoom in"><Svg w={9} h={9}><path d="M0 4.500h9M4.500 0v9" /></Svg></IconButton>
      </StatusGroup>
      <IconButton $before={11}>128%</IconButton>
      <IconButton $before={14} aria-label="Fit slide"><Svg w={16} h={15} stroke="#888"><path d="M.5 5V.500H5M.5.500 5 5M11 .5h4.500V5M15.500.5 11 5M.5 10v4.500H5M.5 14.500 5 10M11 14.500h4.500V10M15.500 14.500 11 10" /></Svg></IconButton>
    </StatusGroup>
  </StatusBar>
);

/* ---------- page ---------- */

export default function App() {
  return (
    <Page>
      <GlobalStyle />
      <TitleBar>
        <QuickAccess>
          <ToggleLabel>AutoSave<Toggle type="checkbox" role="switch" /></ToggleLabel>
          <IconButton aria-label="Home"><Svg w={15} h={16} stroke="#999"><path d="M.5 7 7.500 1l7 6v8.500h-4V9h-6v6.500h-4z" /></Svg></IconButton>
          <IconButton aria-label="Save"><Svg w={14} h={14} stroke="#999"><path d="M.5.500h11l2 2v11H.5zM3.500.500v4h7v-4M3.500 13.500V8h7v5.500" /></Svg></IconButton>
          <IconButton aria-label="Undo"><Svg w={14} h={14} stroke="#999"><path d="M1 1v4.500h5M1 5.500Q5 1 9 1.500t4 4T10 11l-3.500 3" /></Svg></IconButton>
          <IconButton aria-label="Undo history"><Chevron /></IconButton>
          <IconButton aria-label="Redo"><Svg w={14} h={14} stroke="#eee"><path d="M12 3a6 6 0 1 0 1 4M13 0v4H9" /></Svg></IconButton>
          <IconButton aria-label="More commands"><Svg w={14} h={4}><path d="M0 1h2v2H0zM6 1h2v2H6zM12 1h2v2h-2z" fill="#777" stroke="none" /></Svg></IconButton>
        </QuickAccess>
        <DocTitle>
          <Svg w={15} h={15}><path d="M5 1.500h7l2.500 3v8H5z" stroke="#f6d5d5" fill="#fff" /><path d="m8 3 4 2-2 5z" fill="#f08a80" stroke="none" /><path d="M1 7h5v5q-2 4-5 1z" fill="#fff" stroke="#e0607c" strokeWidth={1.300} /></Svg>
          <b>Ultimate Bold Claude</b> — Saved to my Mac <Chevron color="#888" />
        </DocTitle>
        <SearchBox>
          <Svg w={14} h={14} stroke="#999"><circle cx="5.500" cy="5.500" r="5" /><path d="m9 9 4.500 4.500" /></Svg>
          <input placeholder="Search (Cmd + Ctrl + U)" aria-label="Search" />
        </SearchBox>
      </TitleBar>
      <TabBar>
        {["Home", "Insert", "Design", "Transitions", "Animations", "Slide Show", "Review", "View"].map((t) => (
          <Tab key={t} $active={t === "Home"}>{t}</Tab>
        ))}
        <TabActions>
          <TextButton><Svg w={17} h={16}><path d="M2.500 1.500h12q2 0 2 2v6q0 2-2 2H8l-3.500 3.500v-3.500h-2q-2 0-2-2v-6q0-2 2-2z" /></Svg>Comments</TextButton>
          <TextButton><Svg w={17} h={17} stroke="#555"><circle cx="8.500" cy="8.500" r="8" /><circle cx="8.500" cy="8.500" r="4.500" fill="#000" stroke="none" /></Svg>Record</TextButton>
          <ShareButton>
            <Svg w={17} h={16} stroke="#fff" sw={1.300}><path d="M7 1.500H3q-2 0-2 2V13q0 2 2 2h9q2 0 2-2v-2" /><path d="M10 1l6 4.500L10 10V7.500Q6 7.500 4 11q0-6 6-7z" /></Svg>
            Share
            <Chevron color="#fff" />
          </ShareButton>
        </TabActions>
      </TabBar>
      <HomeRibbon />
      <Main>
        <Thumbs>
          <ThumbItem>
            <span>1</span>
            <ThumbButton aria-label="Agenda slide">
              <AgendaSlide>
                <i /><b />
                <div>
                  <h3>Today's Agenda</h3>
                  <ol>{slides.map((s) => <li key={s.number}>{s.title}</li>)}</ol>
                </div>
              </AgendaSlide>
            </ThumbButton>
          </ThumbItem>
          {slides.map((s, i) => (
            <ThumbItem key={s.number}>
              <span>{i + 2}</span>
              <ThumbButton $selected={i === 0}><Slide data={s} /></ThumbButton>
            </ThumbItem>
          ))}
        </Thumbs>
        <Editor>
          <HRuler>{range(16).map((n, i) => <span key={i}>{n}</span>)}</HRuler>
          <DesignerButton aria-label="Designer">
            <Svg w={16} h={16} stroke="#888">
              <path d="m1 11 3-4M2 15l5-7M7 15l3-4" strokeDasharray="2 1" />
              <path d="m9 0 1.300 3.200L13.500 4.500l-3.200 1.300L9 9 7.700 5.800 4.500 4.500l3.200-1.300zM13.500 7.500l.9 2.100 2.100.9-2.100.9-.9 2.100-.9-2.100-2.100-.9 2.100-.9z" fill="#333" stroke="none" />
            </Svg>
          </DesignerButton>
          <Stage>
            <VRuler>{range(9).map((n, i) => <span key={i}>{n}</span>)}</VRuler>
            <Slide data={slides[0]} large />
          </Stage>
          <HScroll />
          <Notes placeholder="Click to add notes" aria-label="Notes" />
        </Editor>
        <Assistant />
      </Main>
      <Status />
    </Page>
  );
}
